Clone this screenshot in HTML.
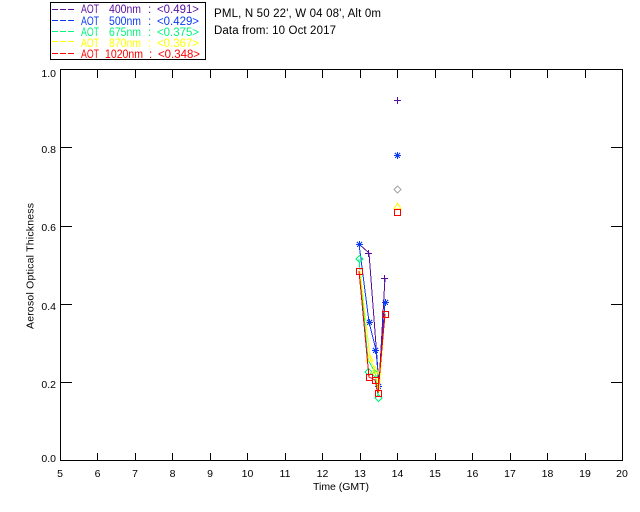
<!DOCTYPE html>
<html><head><meta charset="utf-8"><style>
html,body{margin:0;padding:0;background:#fff;width:640px;height:512px;overflow:hidden}
svg{display:block}
text{font-family:"Liberation Sans",sans-serif;font-size:10.5px;fill:#000}
.l{font-size:11.5px;fill:inherit}
.t{font-size:11.5px}
</style></head><body>
<svg width="640" height="512" viewBox="0 0 640 512" xmlns="http://www.w3.org/2000/svg">
<rect width="640" height="512" fill="#fff"/>
<g shape-rendering="crispEdges" fill="none" stroke="#000" stroke-width="1">
<rect x="50.5" y="2.5" width="155" height="57"/>
<rect x="60.5" y="69.5" width="562" height="391"/>
<path d="M97.5 461V453M135.5 461V453M172.5 461V453M210.5 461V453M247.5 461V453M285.5 461V453M322.5 461V453M360.5 461V453M397.5 461V453M435.5 461V453M472.5 461V453M510.5 461V453M547.5 461V453M585.5 461V453"/>
<path d="M97.5 70V78M135.5 70V78M172.5 70V78M210.5 70V78M247.5 70V78M285.5 70V78M322.5 70V78M360.5 70V78M397.5 70V78M435.5 70V78M472.5 70V78M510.5 70V78M547.5 70V78M585.5 70V78"/>
<path d="M60 147.5H72M60 226.5H72M60 304.5H72M60 382.5H72M611 147.5H622M611 226.5H622M611 304.5H622M611 382.5H622"/>
<g stroke-dasharray="6 2">
<path stroke="#5a0ea0" d="M52 9.5H75"/>
<path stroke="#0b3cf5" d="M52 20.5H75"/>
<path stroke="#00f57d" d="M52 31.5H75"/>
<path stroke="#ffff00" d="M52 41.5H75"/>
<path stroke="#ff0000" d="M52 53.5H75"/>
</g>
</g>
<g style="fill:#5a0ea0"><text class="l" x="81" y="13" textLength="18" lengthAdjust="spacingAndGlyphs">AOT</text><text class="l" x="109" y="13" textLength="32" lengthAdjust="spacingAndGlyphs">400nm</text><text class="l" x="148" y="13">:</text><text class="l" x="157" y="13" textLength="42" lengthAdjust="spacingAndGlyphs">&lt;0.491&gt;</text></g>
<g style="fill:#0b3cf5"><text class="l" x="81" y="25" textLength="18" lengthAdjust="spacingAndGlyphs">AOT</text><text class="l" x="109" y="25" textLength="32" lengthAdjust="spacingAndGlyphs">500nm</text><text class="l" x="148" y="25">:</text><text class="l" x="157" y="25" textLength="42" lengthAdjust="spacingAndGlyphs">&lt;0.429&gt;</text></g>
<g style="fill:#00f57d"><text class="l" x="81" y="36" textLength="18" lengthAdjust="spacingAndGlyphs">AOT</text><text class="l" x="109" y="36" textLength="32" lengthAdjust="spacingAndGlyphs">675nm</text><text class="l" x="148" y="36">:</text><text class="l" x="157" y="36" textLength="42" lengthAdjust="spacingAndGlyphs">&lt;0.375&gt;</text></g>
<g style="fill:#ffff00"><text class="l" x="81" y="47" textLength="18" lengthAdjust="spacingAndGlyphs">AOT</text><text class="l" x="109" y="47" textLength="32" lengthAdjust="spacingAndGlyphs">870nm</text><text class="l" x="148" y="47">:</text><text class="l" x="157" y="47" textLength="42" lengthAdjust="spacingAndGlyphs">&lt;0.367&gt;</text></g>
<g style="fill:#ff0000"><text class="l" x="81" y="58" textLength="18" lengthAdjust="spacingAndGlyphs">AOT</text><text class="l" x="105" y="58" textLength="38" lengthAdjust="spacingAndGlyphs">1020nm</text><text class="l" x="149" y="58">:</text><text class="l" x="158" y="58" textLength="42" lengthAdjust="spacingAndGlyphs">&lt;0.348&gt;</text></g>
<text class="t" x="214" y="17" textLength="167" lengthAdjust="spacing">PML, N 50 22', W 04 08', Alt 0m</text>
<text class="t" x="214" y="34" textLength="122" lengthAdjust="spacing">Data from: 10 Oct 2017</text>
<g text-anchor="end">
<text x="56" y="77">1.0</text><text x="56" y="153">0.8</text><text x="56" y="231">0.6</text><text x="56" y="310">0.4</text><text x="56" y="388">0.2</text><text x="56" y="462">0.0</text>
</g>
<g text-anchor="middle">
<text x="60" y="477">5</text><text x="97.5" y="477">6</text><text x="135" y="477">7</text><text x="172.5" y="477">8</text><text x="210" y="477">9</text><text x="247.5" y="477">10</text><text x="285" y="477">11</text><text x="322.5" y="477">12</text><text x="360" y="477">13</text><text x="397.5" y="477">14</text><text x="435" y="477">15</text><text x="472.5" y="477">16</text><text x="510" y="477">17</text><text x="547.5" y="477">18</text><text x="585" y="477">19</text><text x="622" y="477">20</text>
</g>
<text x="313" y="490" textLength="56" lengthAdjust="spacing">Time (GMT)</text>
<text transform="translate(33.5 329) rotate(-90)" textLength="126" lengthAdjust="spacing">Aerosol Optical Thickness</text>
<g fill="none" stroke-width="1" shape-rendering="crispEdges">
<!-- purple -->
<g stroke="#5a0ea0">
<path d="M359 244L369 253L376 345L379 385L385 278"/>
<path d="M365 253.5H372M368.5 250V257M381 278.5H388M384.5 275V282M394 100.5H401M397.5 97V104"/>
</g>
<!-- blue -->
<g stroke="#0b3cf5">
<path d="M359 244L369 322L376 350L379 386L385 302"/>
<path d="M356 244.5H363M359.5 241V248M357 242L362 247M362 242L357 247"/>
<path d="M366 322.5H373M369.5 319V326M367 320L372 325M372 320L367 325"/>
<path d="M372 350.5H379M375.5 347V354M373 348L378 353M378 348L373 353"/>
<path d="M375 386.5H382M378.5 383V390M376 384L381 389M381 384L376 389"/>
<path d="M382 302.5H389M385.5 299V306M383 300L388 305M388 300L383 305"/>
<path d="M394 155.5H401M397.5 152V159M395 153L400 158M400 153L395 158"/>
</g>
<!-- green -->
<g stroke="#00f57d">
<path d="M359 259L368 360L375 372L378 396L385 315"/>
<path d="M359.5 255.5L363 259L359.5 262.5L356 259Z M368.5 368.5L372 372L368.5 375.5L365 372Z M375.5 370.5L379 374L375.5 377.5L372 374Z M378.5 394.5L382 398L378.5 401.5L375 398Z"/>
</g>
<path stroke="#a8a8a8" d="M397.5 186L401 189.5L397.5 193L394 189.5Z"/>
<!-- yellow -->
<g stroke="#ffff00">
<path d="M360 270L370 358L375 370L379 392L385 313"/>
<path d="M369.5 354L373 361H366Z M375 366L378.5 373H371.5Z M397.5 203L401 209H394Z"/>
</g>
<!-- red -->
<g stroke="#ff0000">
<path d="M359 271L369 377L375 380L378 393L385 314"/>
<path d="M356.5 268.5h6v6h-6zM366.5 374.5h6v6h-6zM372.5 377.5h6v6h-6zM375.5 390.5h6v6h-6zM382.5 311.5h6v6h-6zM394.5 209.5h6v6h-6z"/>
</g>
</g>
</svg>
</body></html>
